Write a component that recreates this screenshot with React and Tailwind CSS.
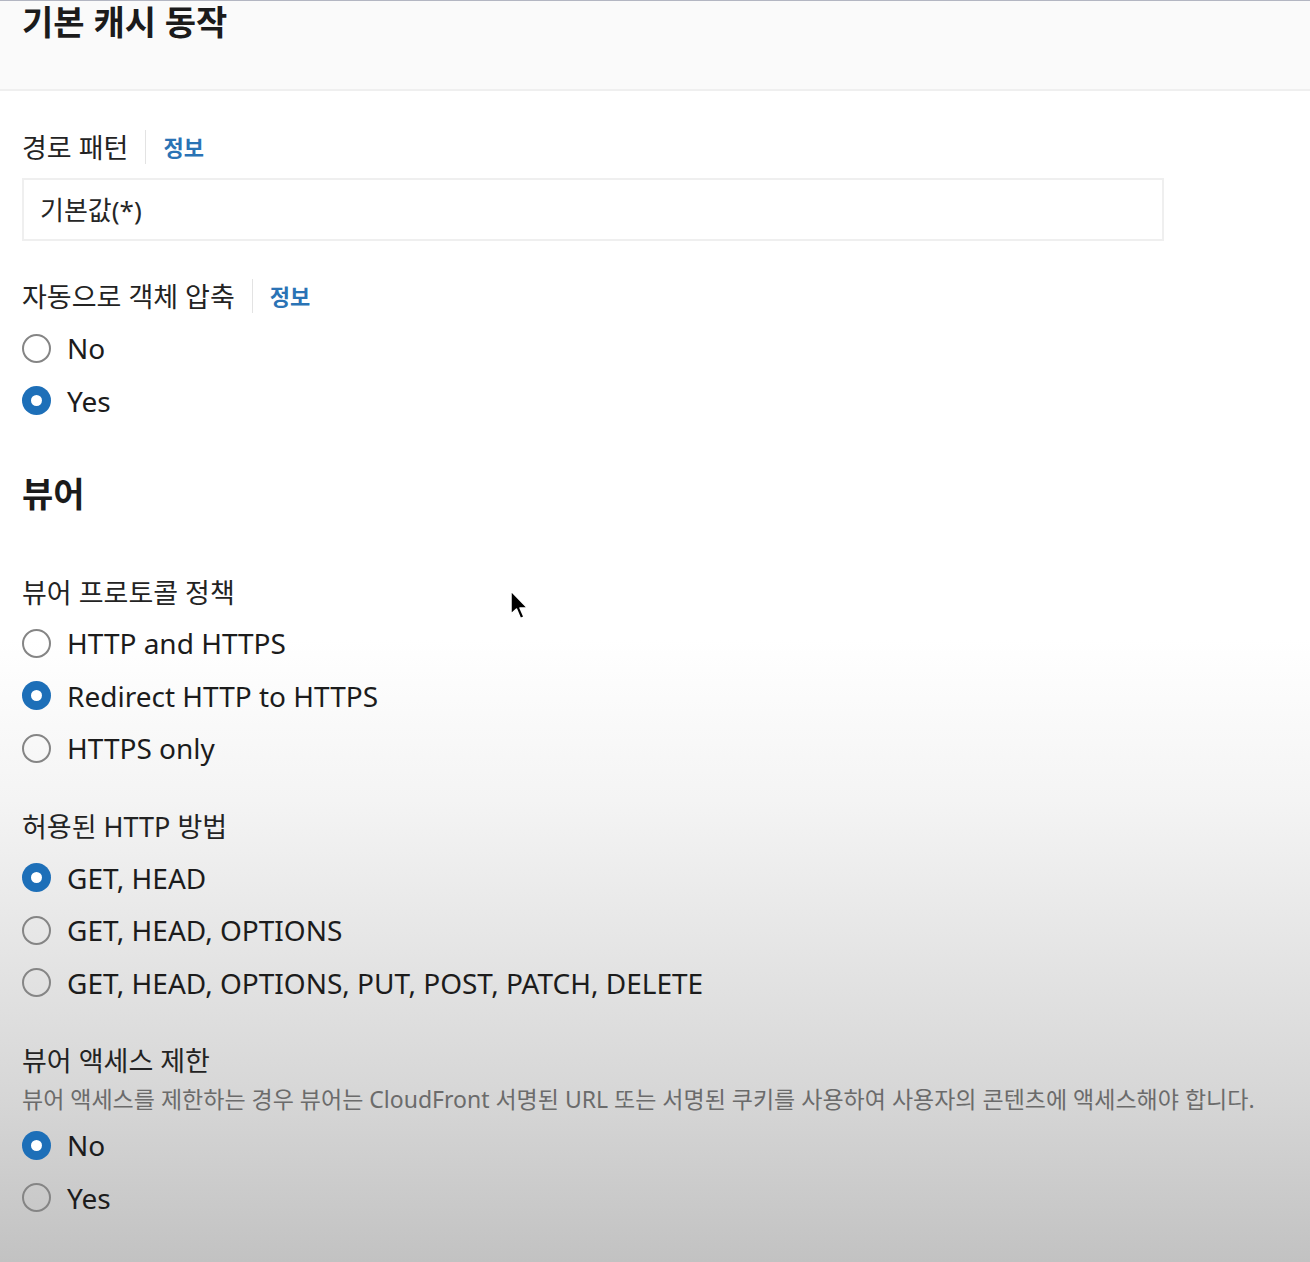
import React from "react";

const FONT = { fontFamily: '"Noto Sans", "Noto Sans CJK KR", sans-serif' };

function Radio({ checked, label }) {
  return (
    <div className="flex items-center h-[52.5px]">
      {checked ? (
        <span className="w-[29px] h-[29px] rounded-full bg-[#1d6fb8] flex items-center justify-center shrink-0">
          <span className="w-[11px] h-[11px] rounded-full bg-white" />
        </span>
      ) : (
        <span className="w-[29px] h-[29px] rounded-full border-2 border-[#858585] shrink-0" />
      )}
      <span className="ml-[16px] text-[28px] text-[#1c1c1c] leading-none">{label}</span>
    </div>
  );
}

function Label({ children, info }) {
  return (
    <div className="flex items-center h-[40px]">
      <span className="text-[27px] text-[#232323] leading-none">{children}</span>
      {info && (
        <>
          <span className="mx-[17px] w-px h-[34px] bg-[#e3e3e3]" />
          <span className="text-[22px] font-bold text-[#2a73b5] leading-none">정보</span>
        </>
      )}
    </div>
  );
}

export default function App() {
  return (
    <div
      style={FONT}
      className="relative w-[1310px] h-[1262px] overflow-hidden bg-[linear-gradient(to_bottom,#ffffff_0px,#ffffff_640px,#f4f4f4_800px,#e4e4e4_960px,#d6d6d6_1100px,#c2c2c2_1262px)]"
    >
      <div className="h-[91px] bg-[#fafafa] border-t border-[#b3b6c2] border-b-2 border-b-[#efefef] px-[22px]">
        <h1 className="text-[34px] font-bold text-[#1b1b1b] leading-none pt-[4px]">기본 캐시 동작</h1>
      </div>

      <div className="px-[22px] pt-[36px]">
        <Label info>경로 패턴</Label>
        <div className="mt-[11px] w-[1142px] h-[63px] border-2 border-[#efefef] bg-white flex items-center px-[16px]">
          <span className="text-[26px] text-[#262626] leading-none">기본값(*)</span>
        </div>

        <div className="mt-[35px]">
          <Label info>자동으로 객체 압축</Label>
        </div>
        <div className="mt-[6px]">
          <Radio label="No" />
          <Radio checked label="Yes" />
        </div>

        <h2 className="mt-[50px] text-[34px] font-bold text-[#1b1b1b] leading-none">뷰어</h2>

        <div className="mt-[61px]">
          <Label>뷰어 프로토콜 정책</Label>
        </div>
        <div className="mt-[5px]">
          <Radio label="HTTP and HTTPS" />
          <Radio checked label="Redirect HTTP to HTTPS" />
          <Radio label="HTTPS only" />
        </div>

        <div className="mt-[32px]">
          <Label>허용된 HTTP 방법</Label>
        </div>
        <div className="mt-[5px]">
          <Radio checked label="GET, HEAD" />
          <Radio label="GET, HEAD, OPTIONS" />
          <Radio label="GET, HEAD, OPTIONS, PUT, POST, PATCH, DELETE" />
        </div>

        <div className="mt-[31px]">
          <Label>뷰어 액세스 제한</Label>
        </div>
        <div className="text-[23px] text-[#6b6b6b] leading-none mt-[8px] whitespace-nowrap">
          뷰어 액세스를 제한하는 경우 뷰어는 CloudFront 서명된 URL 또는 서명된 쿠키를 사용하여 사용자의 콘텐츠에 액세스해야 합니다.
        </div>
        <div className="mt-[8px]">
          <Radio checked label="No" />
          <Radio label="Yes" />
        </div>
      </div>

      <svg className="absolute left-[509px] top-[589px]" width="22" height="34" viewBox="0 0 22 34">
        <path d="M2 2 L2 25 L7.5 20 L11.5 29.5 L15 28 L11 19 L18.5 19 Z" fill="#000" stroke="#fff" strokeWidth="1.5" strokeLinejoin="round" />
      </svg>
    </div>
  );
}
